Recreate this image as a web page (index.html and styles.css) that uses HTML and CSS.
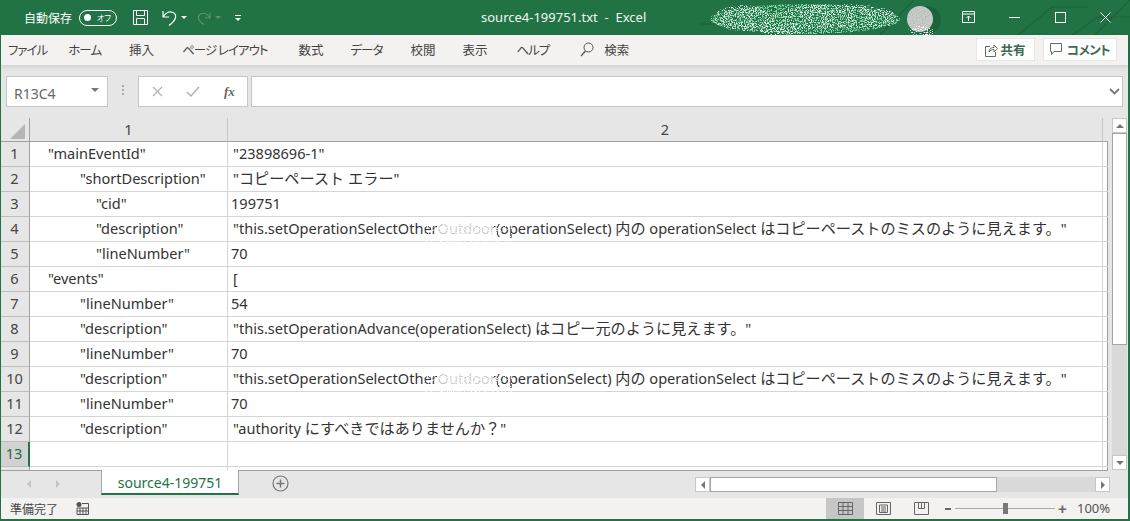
FILE: index.html
```html
<!DOCTYPE html>
<html lang="ja">
<head>
<meta charset="utf-8">
<title>source4-199751.txt - Excel</title>
<link rel="stylesheet" href="styles.css">
</head>
<body>
<div class="app">
  <header class="titlebar">
    <svg class="circuit" width="430" height="35" viewBox="0 0 430 35"><g fill="none" stroke="#1b6339" stroke-width="1.2"><path d="M180 35 214 0M318 35l34-28h36M372 35l26-18h32M395 35 430 0M60 9h70M120 35l28-26M-10 24h50"/><path d="M-300 35a26 26 0 0 1 52 0M-236 35a16 16 0 0 1 32 0"/></g></svg>
    <span class="autosave">自動保存</span>
    <span class="toggle"><i class="knob"></i><span class="off">オフ</span></span>
    <svg class="save" width="17" height="17" viewBox="0 0 17 17"><path d="M1.500 1.500h14v14h-14zM4.500 1.500v5h8v-5M4.500 15.500v-6h8v6" fill="none" stroke="#fff"/></svg>
    <svg class="undo" width="18" height="18" viewBox="0 0 18 18"><path d="M2 2v6h6M2.500 7.500C5 3 9 2 12 3.500c4 2 4 7-4 13" fill="none" stroke="#fff" stroke-width="1.200"/></svg>
    <i class="caret light"></i>
    <svg class="redo" width="16" height="16" viewBox="0 0 16 16"><path d="M14 3v5H9M13.500 7.500C11 3 7 2.500 4.500 4c-3.500 2-3 6.500 3.500 10.500" fill="none" stroke="#58946f" stroke-width="1.100"/></svg>
    <i class="caret dim"></i>
    <span class="qat"><i></i><i class="caret light"></i></span>
    <span class="doc-title">source4-199751.txt&nbsp; -&nbsp; Excel</span>
    <svg class="noise" width="250" height="37" viewBox="0 0 250 37">
      <defs>
        <filter id="speckle" x="0" y="0" width="100%" height="100%"><feTurbulence type="fractalNoise" baseFrequency="0.95" numOctaves="2" seed="7"/><feColorMatrix values="0 0 0 0 1 0 0 0 0 1 0 0 0 0 1 0 0 0 9 -5.100"/><feComposite in2="SourceGraphic" operator="in"/></filter>
        <filter id="speckle-green" x="0" y="0" width="100%" height="100%"><feTurbulence type="fractalNoise" baseFrequency="0.8" numOctaves="2" seed="21"/><feColorMatrix values="0 0 0 0 .25 0 0 0 0 .72 0 0 0 0 .4 0 0 0 9 -4.300"/><feComposite in2="SourceGraphic" operator="in"/></filter>
        <filter id="speckle-dark" x="0" y="0" width="100%" height="100%"><feTurbulence type="fractalNoise" baseFrequency="0.9" numOctaves="1" seed="3"/><feColorMatrix values="0 0 0 0 .45 0 0 0 0 .5 0 0 0 0 .47 0 0 0 9 -4.700"/><feComposite in2="SourceGraphic" operator="in"/></filter>
      </defs>
      <ellipse cx="226" cy="20" rx="15" ry="14" fill="#1b6339"/>
      <circle cx="220" cy="19" r="13" fill="#c9cbc9"/>
      <g filter="url(#speckle-dark)"><circle cx="220" cy="19" r="12"/></g>
      <g filter="url(#speckle-green)"><ellipse cx="105" cy="19" rx="95" ry="15"/></g>
      <g filter="url(#speckle)"><ellipse cx="42" cy="18" rx="28" ry="13"/><ellipse cx="138" cy="15" rx="58" ry="11"/><ellipse cx="105" cy="21" rx="93" ry="8"/><ellipse cx="80" cy="31" rx="20" ry="5"/><ellipse cx="222" cy="31" rx="14" ry="5"/></g>
    </svg>
    <svg class="win win-restore" width="15" height="13" viewBox="0 0 15 13"><path d="M1.500.5h12v11h-12zM1.500 3h12M7.500 10V5M5.500 7l2-2 2 2" fill="none" stroke="#fff"/></svg>
    <i class="win-min"></i>
    <i class="win-max"></i>
    <svg class="win-close" width="11" height="11" viewBox="0 0 11 11"><path d="M.5.500l10 10M10.500.500l-10 10" stroke="#fff" fill="none"/></svg>
  </header>

  <div class="body">
    <nav class="ribbon">
      <span class="t1 kana">ファイル</span><span class="t2 kana">ホーム</span><span class="t3">挿入</span><span class="t4 kana">ページ レイアウト</span><span class="t5">数式</span><span class="t6 kana">データ</span><span class="t7">校閲</span><span class="t8">表示</span><span class="t9 kana">ヘルプ</span>
      <svg class="search" width="14" height="15" viewBox="0 0 14 15"><circle cx="8.500" cy="5.500" r="4.500" fill="none" stroke="#555"/><path d="M5.500 9 1 14" stroke="#555" stroke-width="1.200"/></svg>
      <span class="t10">検索</span>
      <span class="rb-btn share"><svg width="13" height="14" viewBox="0 0 13 14"><path d="M5 3.500H.5v10h10V9M4 9c0-3 2-4.500 5-4.500V2l3.500 3.500L9 9V6.500C7 6.500 5 7.500 4 9z" fill="none" stroke="#5f6f66"/></svg><b>共有</b></span>
      <span class="rb-btn comment"><svg width="13" height="13" viewBox="0 0 13 13"><path d="M.5.500h11v8H4l-2.500 3v-3h-1z" fill="none" stroke="#5f6f66"/></svg><b class="kana">コメント</b></span>
    </nav>

    <section class="formula">
      <div class="namebox"><span>R13C4</span><i class="caret gray"></i></div>
      <span class="vdots"></span>
      <div class="fx-btns">
        <svg width="11" height="11" viewBox="0 0 11 11"><path d="M1 1l9 9M10 1l-9 9" stroke="#b4b4b4" stroke-width="1.300" fill="none"/></svg>
        <svg width="14" height="11" viewBox="0 0 14 11"><path d="M1 6l4 4 8-9" stroke="#b4b4b4" stroke-width="1.500" fill="none"/></svg>
        <span class="fx">fx</span>
      </div>
      <div class="fx-input"><svg width="11" height="7" viewBox="0 0 11 7"><path d="M1 1l4.500 4.500L10 1" fill="none" stroke="#777" stroke-width="1.800"/></svg></div>
    </section>

    <section class="sheet">
      <div class="grid">
        <div class="corner"><i></i></div><div class="ch">1</div><div class="ch">2</div><div class="ch last"></div>

        <div class="rh">1</div><div class="c i1">"mainEventId"</div><div class="c s">"23898696-1"</div><div class="c e"></div>
        <div class="rh">2</div><div class="c i2">"shortDescription"</div><div class="c s">"<span class="ja">コピーペースト エラー</span>"</div><div class="c e"></div>
        <div class="rh">3</div><div class="c i3">"cid"</div><div class="c n">199751</div><div class="c e"></div>
        <div class="rh">4</div><div class="c i3">"description"</div><div class="c s">"this.setOperationSelectOtherOutdoor(operationSelect) <span class="ja">内の</span> operationSelect <span class="ja">はコピーペーストのミスのように見えます。</span>"<svg class="mask" width="90" height="26" viewBox="0 0 90 26"><rect width="90" height="26" filter="url(#speckle)"/><rect x="14" y="4" width="56" height="16" fill="#fff" opacity=".75"/></svg></div><div class="c e"></div>
        <div class="rh">5</div><div class="c i3">"lineNumber"</div><div class="c n">70</div><div class="c e"></div>
        <div class="rh">6</div><div class="c i1">"events"</div><div class="c s">[</div><div class="c e"></div>
        <div class="rh">7</div><div class="c i2">"lineNumber"</div><div class="c n">54</div><div class="c e"></div>
        <div class="rh">8</div><div class="c i2">"description"</div><div class="c s">"this.setOperationAdvance(operationSelect) <span class="ja">はコピー元のように見えます。</span>"</div><div class="c e"></div>
        <div class="rh">9</div><div class="c i2">"lineNumber"</div><div class="c n">70</div><div class="c e"></div>
        <div class="rh">10</div><div class="c i2">"description"</div><div class="c s">"this.setOperationSelectOtherOutdoor(operationSelect) <span class="ja">内の</span> operationSelect <span class="ja">はコピーペーストのミスのように見えます。</span>"<svg class="mask" width="90" height="26" viewBox="0 0 90 26"><rect width="90" height="26" filter="url(#speckle)"/><rect x="14" y="4" width="56" height="16" fill="#fff" opacity=".75"/></svg></div><div class="c e"></div>
        <div class="rh">11</div><div class="c i2">"lineNumber"</div><div class="c n">70</div><div class="c e"></div>
        <div class="rh">12</div><div class="c i2">"description"</div><div class="c s">"authority <span class="ja">にすべきではありませんか？</span>"</div><div class="c e"></div>
        <div class="rh sel">13</div><div class="c"></div><div class="c"></div><div class="c e"></div>
        <div class="rh tail"></div><div class="c tail"></div><div class="c tail"></div><div class="c e tail"></div>
      </div>
      <div class="vscroll">
        <span class="sb-btn"><i class="tri up"></i></span>
        <span class="vthumb"></span>
        <span class="vtrack"></span>
        <span class="sb-btn"><i class="tri down"></i></span>
      </div>
    </section>

    <section class="tabbar">
      <i class="tri left dim"></i><i class="tri right dim"></i>
      <div class="tab">source4-199751</div>
      <svg class="add" width="17" height="17" viewBox="0 0 17 17"><circle cx="8.500" cy="8.500" r="7.500" fill="none" stroke="#777" stroke-width="1.200"/><path d="M8.500 4.500v8M4.500 8.500h8" stroke="#777" stroke-width="1.500"/></svg>
      <div class="hscroll">
        <span class="sb-btn"><i class="tri left"></i></span>
        <span class="hthumb"></span>
        <span class="htrack"></span>
        <span class="sb-btn"><i class="tri right"></i></span>
      </div>
    </section>

    <footer class="status">
      <span class="ready">準備完了</span>
      <svg class="macro" width="13" height="13" viewBox="0 0 13 13"><circle cx="3" cy="2.500" r="2.500" fill="#555"/><path d="M6 1.500h6.500V12.500H1V6h11.500M1 9h11.500M4 6v6.500M7 6v6.500M10 6v6.500" fill="none" stroke="#555"/></svg>
      <span class="view active"><svg width="15" height="13" viewBox="0 0 15 13"><path d="M.5.500h14v12H.5zM.5 4.500h14M.5 8.500h14M5 .5v12M10 .5v12" fill="none" stroke="#666"/></svg></span>
      <span class="view"><svg width="15" height="13" viewBox="0 0 15 13"><path d="M.5.500h14v12H.5zM3.500 3h8v7.500h-8zM5 5h5M5 7h5M5 9h5" fill="none" stroke="#666"/></svg></span>
      <span class="view"><svg width="15" height="13" viewBox="0 0 15 13"><path d="M.5.500h14v12H.5zM4.500.5v6h6v-6M7.500.5v6" fill="none" stroke="#666"/></svg></span>
      <div class="zoom"><i class="minus"></i><span class="slider"><i class="handle"></i></span><span class="plus">+</span></div>
      <span class="pct">100%</span>
    </footer>
  </div>
</div>
</body>
</html>
```

FILE: styles.css
```css
* { box-sizing: border-box; }
html, body { margin: 0; padding: 0; }
body { font-family: "Noto Sans", "Noto Sans CJK JP", sans-serif; overflow: hidden; }
i { display: block; font-style: normal; }
.app { width: 1130px; height: 521px; background: #217346; display: flex; flex-direction: column; overflow: hidden; }

/* title bar */
.titlebar { position: relative; height: 35px; flex: none; display: flex; align-items: center; color: #fff; padding-left: 24px; }
.circuit { position: absolute; right: 0; top: 0; }
.autosave { font: 12px "Noto Sans CJK JP", sans-serif; width: 48px; white-space: nowrap; }
.toggle { margin-left: 7px; width: 38px; height: 16px; border: 1px solid #fff; border-radius: 8px; display: flex; align-items: center; padding-left: 4px; }
.knob { width: 7px; height: 7px; border-radius: 50%; background: #fff; }
.off { font: 8px "Noto Sans CJK JP", sans-serif; margin-left: 6px; white-space: nowrap; font-feature-settings: "palt"; }
.save { margin-left: 15px; }
.undo { margin-left: 12px; }
.caret { width: 0; height: 0; border-left: 3px solid transparent; border-right: 3px solid transparent; border-top: 3px solid #fff; }
.caret.light { margin-left: 2px; }
.caret.dim { border-top-color: #58946f; margin-left: 3px; }
.redo { margin-left: 9px; }
.qat { margin-left: 14px; display: flex; flex-direction: column; gap: 2px; }
.qat i:first-child { width: 6px; height: 1px; background: #fff; margin-left: 0; }
.qat .caret.light { margin-left: 0; }
.doc-title { position: absolute; left: 481px; top: 8px; font-size: 13px; line-height: 18px; white-space: nowrap; color: #f2f7f4; }
.noise { position: absolute; left: 700px; top: 0; }
.win-restore { position: absolute; left: 961px; top: 11px; }
.win-min { position: absolute; left: 1009px; top: 17px; width: 11px; height: 1px; background: #fff; }
.win-max { position: absolute; left: 1055px; top: 12px; width: 11px; height: 11px; border: 1px solid #fff; }
.win-close { position: absolute; left: 1100px; top: 12px; }

.body { flex: 1; margin: 0 2px 2px 1px; background: #e6e6e6; display: flex; flex-direction: column; min-height: 0; }

/* ribbon */
.ribbon { height: 30px; flex: none; background: #f3f2f1; display: flex; align-items: center; padding: 0 0 1px 7px; font: 12.5px "Noto Sans CJK JP", sans-serif; font-feature-settings: "palt"; color: #444; box-shadow: 0 2px 4px rgba(0,0,0,.1); white-space: nowrap; position: relative; }
.kana { letter-spacing: -1px; }
.t2 { margin-left: 21px; }
.t3 { margin-left: 28px; }
.t4 { margin-left: 28px; }
.t5 { margin-left: 31px; }
.t6 { margin-left: 27px; }
.t7 { margin-left: 28px; }
.t8 { margin-left: 27px; }
.t9 { margin-left: 29px; }
.search { margin-left: 31px; }
.t10 { margin-left: 10px; }
.rb-btn { height: 23px; background: #fff; border: 1px solid #e8e7e6; display: flex; align-items: center; justify-content: center; gap: 2px; color: #3f6a52; font-size: 12.5px; }
.rb-btn b { font-weight: 700; }
.rb-btn b.kana { letter-spacing: -.5px; }
.share { width: 59px; margin-left: auto; }
.comment { width: 74px; margin-left: 8px; margin-right: 11px; gap: 4px; }

/* formula bar */
.formula { height: 45px; flex: none; display: flex; align-items: flex-start; padding: 11px 5px 0 5px; }
.namebox, .fx-btns, .fx-input { height: 31px; background: #fff; border: 1px solid #c6c6c6; }
.namebox { width: 102px; display: flex; align-items: center; justify-content: space-between; padding: 3px 8px 0 7px; color: #666; font-size: 14px; }
.caret.gray { border-left-width: 4px; border-right-width: 4px; border-top: 4px solid #777; margin-top: -6px; }
.vdots { width: 2px; height: 11px; margin: 9px 14px 0 14px; background: repeating-linear-gradient(#aaa 0 2px, transparent 2px 4px); }
.fx-btns { width: 110px; display: flex; align-items: center; padding-left: 13px; }
.fx-btns svg + svg { margin-left: 23px; }
.fx { font: italic 700 13px "Liberation Serif", serif; color: #666; margin-left: 24px; }
.fx-input { flex: 1; margin-left: 3px; display: flex; align-items: center; justify-content: flex-end; padding-right: 1px; }
.fx-input svg { margin-right: 1px; }

/* sheet */
.sheet { height: 361px; flex: none; display: flex; padding-top: 8px; }
.grid { width: 1107px; height: 353px; display: grid; grid-template-columns: 29px 198px 875px 5px; grid-template-rows: 24px repeat(13, 25px) 3px; background: #fff; border-right: 1px solid #9f9f9f; border-bottom: 1px solid #9f9f9f; font-size: 14.55px; color: #333; }
.ja { font-size: 15.15px; }
.corner, .ch { background: #e6e6e6; border-bottom: 1px solid #9f9f9f; border-right: 1px solid #c6c6c6; }
.corner { border-right-color: #9f9f9f; padding: 6px 0 0 10px; }
.corner i { width: 0; height: 0; border-left: 15px solid transparent; border-bottom: 15px solid #b5b5b5; margin-left: -1px; }
.ch { display: flex; align-items: center; justify-content: center; color: #444; padding-bottom: 2px; }
.ch.last { border-right: 0; }
.rh { background: #e6e6e6; border-right: 1px solid #9f9f9f; border-bottom: 1px solid #bdbdbd; display: flex; align-items: center; justify-content: center; color: #444; padding: 0 1px 2px 0; }
.rh.sel { background: #d2d2d2; border-right: 2px solid #217346; color: #1f6b41; }
.rh.tail { border-bottom: 0; padding: 0; }
.c { border-right: 1px solid #d4d4d4; border-bottom: 1px solid #d4d4d4; line-height: 22px; white-space: nowrap; position: relative; min-width: 0; overflow: visible; }
.c.tail { border-bottom: 0; }
.c.e { border-right: 0; }
.i1 { padding-left: 18px; }
.i2 { padding-left: 50px; }
.i3 { padding-left: 66px; }
.s { padding-left: 5px; }
.n { padding-left: 3px; }
.mask { position: absolute; left: 195px; top: 0; }

/* scrollbars */
.vscroll { width: 15px; margin-left: 4px; display: flex; flex-direction: column; background: #d9d9d9; height: 352px; }
.sb-btn { width: 15px; height: 15px; flex: none; background: #fff; border: 1px solid #c6c6c6; display: flex; align-items: center; justify-content: center; }
.vthumb { height: 212px; flex: none; background: #fff; border: 1px solid #a6a6a6; }
.vtrack, .htrack { flex: 1; background: #d9d9d9; }
.tri { width: 0; height: 0; }
.tri.up { border-left: 4px solid transparent; border-right: 4px solid transparent; border-bottom: 4px solid #777; }
.tri.down { border-left: 4px solid transparent; border-right: 4px solid transparent; border-top: 4px solid #777; }
.tri.left { border-top: 4px solid transparent; border-bottom: 4px solid transparent; border-right: 4px solid #777; }
.tri.right { border-top: 4px solid transparent; border-bottom: 4px solid transparent; border-left: 4px solid #777; }
.tri.dim { border-left-color: #c4c4c4; border-right-color: #c4c4c4; }
.tri.left.dim { border-left-color: transparent; }
.tri.right.dim { border-right-color: transparent; }

/* tabs */
.tabbar { height: 27px; flex: none; display: flex; align-items: flex-start; padding-left: 26px; }
.tabbar > .tri { margin-top: 9px; }
.tabbar > .tri.right { margin-left: 25px; }
.tab { width: 138px; height: 25px; margin-left: 41px; margin-top: -1px; background: #fff; border: 1px solid #a6a6a6; border-top: 0; border-bottom: 2px solid #217346; text-align: center; color: #217346; font-size: 14px; line-height: 26px; white-space: nowrap; position: relative; }
.add { margin: 4px 0 0 33px; }
.hscroll { width: 415px; height: 15px; margin: 6px 18px 0 auto; display: flex; background: #d9d9d9; }
.hthumb { width: 287px; flex: none; background: #fff; border: 1px solid #a6a6a6; }

/* status */
.status { height: 21px; flex: none; background: #f3f2f1; display: flex; align-items: stretch; padding-left: 9px; color: #444; font: 12px "Noto Sans CJK JP", sans-serif; }
.ready { width: 48px; line-height: 21px; white-space: nowrap; }
.macro { margin: 4px 0 0 18px; }
.view { width: 38px; display: flex; align-items: center; justify-content: center; }
.view.active { margin-left: auto; background: #c6c6c6; }
.zoom { width: 137px; display: flex; align-items: center; padding-left: 5px; }
.minus { width: 6px; height: 2px; background: #666; }
.slider { position: relative; width: 100px; height: 1px; margin-left: 4px; background: #aaa; }
.handle { position: absolute; left: 48px; top: -5px; width: 5px; height: 11px; background: #777; }
.plus { margin-left: 3px; font: 700 15px "Liberation Sans", sans-serif; color: #666; }
.pct { width: 51px; font: 13px/21px "Noto Sans", sans-serif; color: #555; white-space: nowrap; }
```
